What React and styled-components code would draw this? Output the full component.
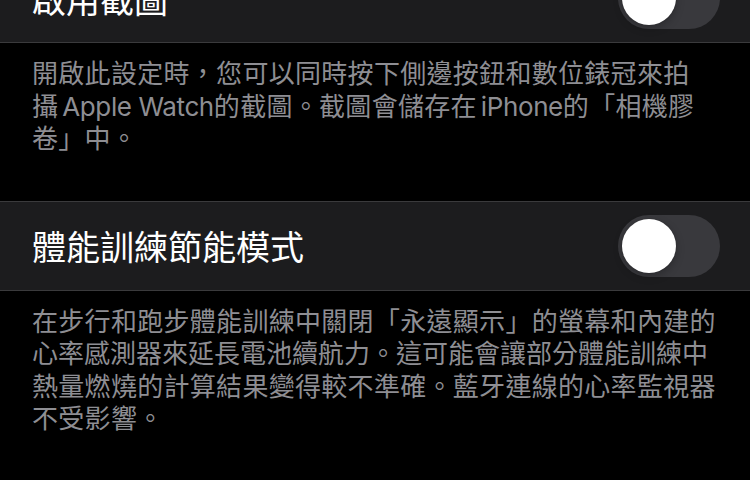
import React from "react";
import styled, { createGlobalStyle } from "styled-components";

const GlobalStyle = createGlobalStyle`
html, body {
    margin: 0;
    padding: 0;
    background: #000;
    overflow: hidden;
}
body {
    font-family: Inter, "Noto Sans CJK TC", sans-serif;
    -webkit-font-smoothing: antialiased;
}
`

export default function App(){
    return(
        <Page>
            <GlobalStyle/>
            <Cell $clipped>
                <Title>啟用截圖</Title>
                <Switch/>
            </Cell>
            <Footer>
                <Line>開啟此設定時，您可以同時按下側邊按鈕和數位錶冠來拍</Line>
                <Line>攝<Latin>Apple Watch</Latin>的截圖。截圖會儲存在<Latin>iPhone</Latin>的「相機膠</Line>
                <Line>卷」中。</Line>
            </Footer>
            <Cell>
                <Title>體能訓練節能模式</Title>
                <Switch/>
            </Cell>
            <Footer>
                <Line>在步行和跑步體能訓練中關閉「永遠顯示」的螢幕和內建的</Line>
                <Line $tight>心率感測器來延長電池續航力。這可能會讓部分體能訓練中</Line>
                <Line>熱量燃燒的計算結果變得較不準確。藍牙連線的心率監視器</Line>
                <Line>不受影響。</Line>
            </Footer>
        </Page>
    )
}

function Switch(){
    return(
        <Track>
            <Knob/>
        </Track>
    )
}

const Page = styled.div`
display: flex;
flex-direction: column;
width: 750px;
height: 480px;
background: #000;
`

const Cell = styled.div`
display: flex;
align-items: center;
justify-content: space-between;
flex-shrink: 0;
height: 88px;
margin-top: ${p => p.$clipped ? "-47px" : "0"};
padding: 0 30px 0 32px;
background-color: #1c1c1e;
border-top: 1px solid #3a3a3c;
border-bottom: 1px solid #3a3a3c;
`

const Title = styled.div`
color: #fff;
font-size: 34px;
`

const Track = styled.div`
display: flex;
align-items: center;
box-sizing: border-box;
width: 102px;
height: 62px;
padding: 4px;
border-radius: 31px;
background-color: #39393d;
`

const Knob = styled.div`
width: 54px;
height: 54px;
border-radius: 50%;
background-color: #fff;
box-shadow: 0 3px 8px rgba(0,0,0,0.25), 0 0 0 1px rgba(0,0,0,0.04);
`

const Footer = styled.div`
display: flex;
flex-direction: column;
padding: 15px 32px 0;
margin-bottom: 45px;
color: #8e8e93;
font-size: 26px;
line-height: 32.5px;
letter-spacing: 0.3px;
`

const Line = styled.span`
display: block;
white-space: nowrap;
letter-spacing: ${p => p.$tight ? "0px" : "0.3px"};
`

const Latin = styled.span`
margin: 0 0 0 4px;
letter-spacing: -0.4px;
`
